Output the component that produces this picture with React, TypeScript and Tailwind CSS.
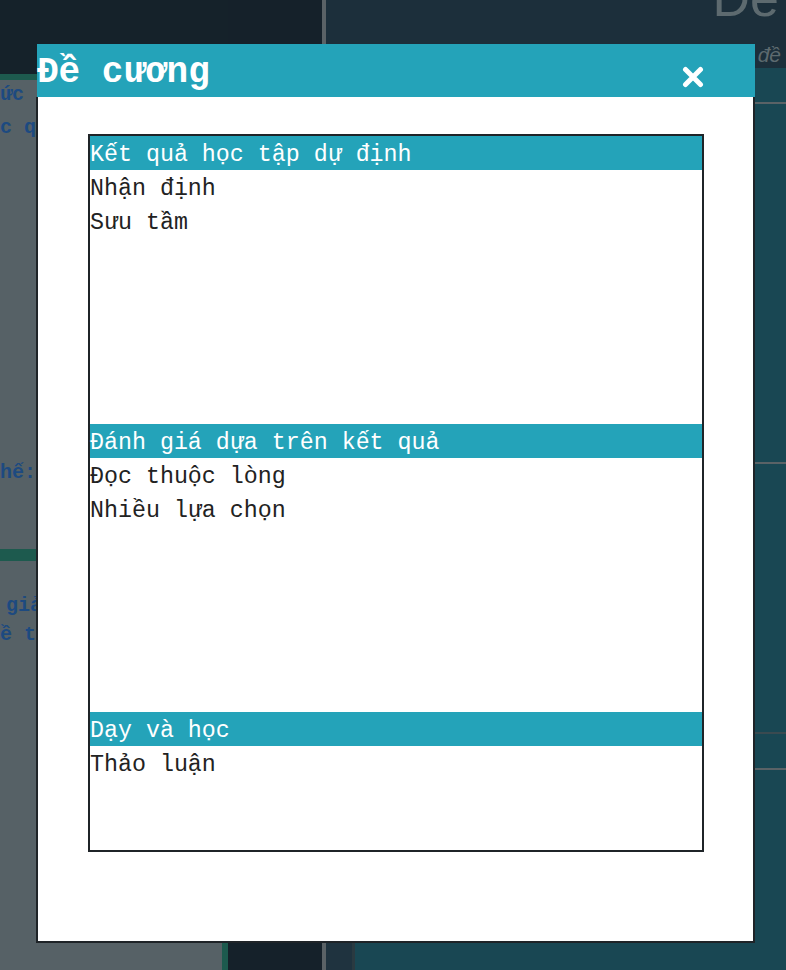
import { useState } from 'react';

const mono = { fontFamily: '"Liberation Mono", "DejaVu Sans Mono", monospace' };

const sections: { title: string; items: string[] }[] = [
  { title: 'Kết quả học tập dự định', items: ['Nhận định', 'Sưu tầm'] },
  { title: 'Đánh giá dựa trên kết quả', items: ['Đọc thuộc lòng', 'Nhiều lựa chọn'] },
  { title: 'Dạy và học', items: ['Thảo luận'] },
];

const CloseIcon = () => (
  <svg width="22" height="22" viewBox="0 0 22 22">
    <path d="M3.5 3.5 L18.5 18.5 M18.5 3.5 L3.5 18.5" stroke="white" strokeWidth="5" strokeLinecap="round" />
  </svg>
);

export default function App() {
  const [open, setOpen] = useState(true);

  return (
    <div className="relative w-[786px] h-[970px] overflow-hidden">
      {/* page behind the overlay */}
      <div className="flex w-full h-full">
        <div className="w-[222px] flex flex-col">
          <div className="h-[74px] bg-[#15222a]" />
          <div className="h-[6px] bg-[#1d5a4e]" />
          <div className="flex-1 bg-[#566166] overflow-hidden text-[20px] font-bold text-[#1d4a80] whitespace-nowrap" style={mono}>
            <div className="h-[33px] leading-[33px] -mt-[2px]">ức</div>
            <div className="h-[33px] leading-[33px]">c q</div>
            <div className="h-[33px] leading-[33px] mt-[312px]">hế:</div>
            <div className="h-[12px] mt-[60px] bg-[#1d5a4e]" />
            <div className="h-[29px] leading-[29px] mt-[30px] pl-[6px]">giả</div>
            <div className="h-[29px] leading-[29px]">ề tí</div>
          </div>
        </div>
        <div className="w-[6px] flex flex-col">
          <div className="h-[74px] bg-[#15222a]" />
          <div className="flex-1 bg-[#1d5a4e]" />
        </div>
        <div className="w-[94px] bg-[#15212a]" />
        <div className="w-[4px] bg-[#5a6266]" />
        <div className="flex-1 flex flex-col">
          <div className="h-[68px] bg-[#1c2f3b] overflow-hidden flex flex-col items-end pr-[5px] text-[#5d6a6f]" style={{ fontFamily: '"Liberation Sans", Arial, sans-serif' }}>
            <div className="text-[52px] leading-none -mt-[28px] pr-[2px]">Đề</div>
            <div className="text-[21px] italic leading-none mt-[20px]">Danh sách những chủ đề</div>
          </div>
          <div className="flex-1 flex">
            <div className="w-[26px] bg-[#1f333f]" />
            <div className="w-[3px] bg-[#2a3a41]" />
            <div className="flex-1 bg-[#194753] flex flex-col">
              <div className="h-[2px] mt-[34px] bg-[#5a6266]" />
              <div className="h-[2px] mt-[358px] bg-[#5a6266]" />
              <div className="h-[2px] mt-[268px] bg-[#3a4a50]" />
              <div className="h-[2px] mt-[34px] bg-[#5a6266]" />
            </div>
          </div>
        </div>
      </div>

      {/* modal */}
      {open && (
        <div className="absolute left-[37px] top-[44px] w-[718px] flex flex-col" style={mono}>
          <div className="h-[53px] bg-[#24a3b9] flex items-center justify-between pr-[51px]">
            <span className="text-[36px] font-bold text-white leading-none pt-[4px]">Đề cương</span>
            <button onClick={() => setOpen(false)} className="flex items-center justify-center pt-[12px]">
              <CloseIcon />
            </button>
          </div>
          <div className="h-[846px] bg-white border-x-2 border-b-2 border-[#1f2428] -ml-[1px] pl-[50px] pt-[37px]">
            <div className="w-[616px] h-[718px] border-2 border-[#1f2428] flex flex-col">
              {sections.map((s) => (
                <div key={s.title} className="h-[288px] last:h-auto last:flex-1 flex flex-col">
                  <div className="h-[34px] bg-[#24a3b9] text-white text-[23.3px] pt-[4px] leading-[30px] whitespace-nowrap">{s.title}</div>
                  {s.items.map((it) => (
                    <div key={it} className="h-[34px] text-[#222] text-[23.3px] pt-[4px] leading-[30px] whitespace-nowrap">{it}</div>
                  ))}
                </div>
              ))}
            </div>
          </div>
        </div>
      )}
    </div>
  );
}
